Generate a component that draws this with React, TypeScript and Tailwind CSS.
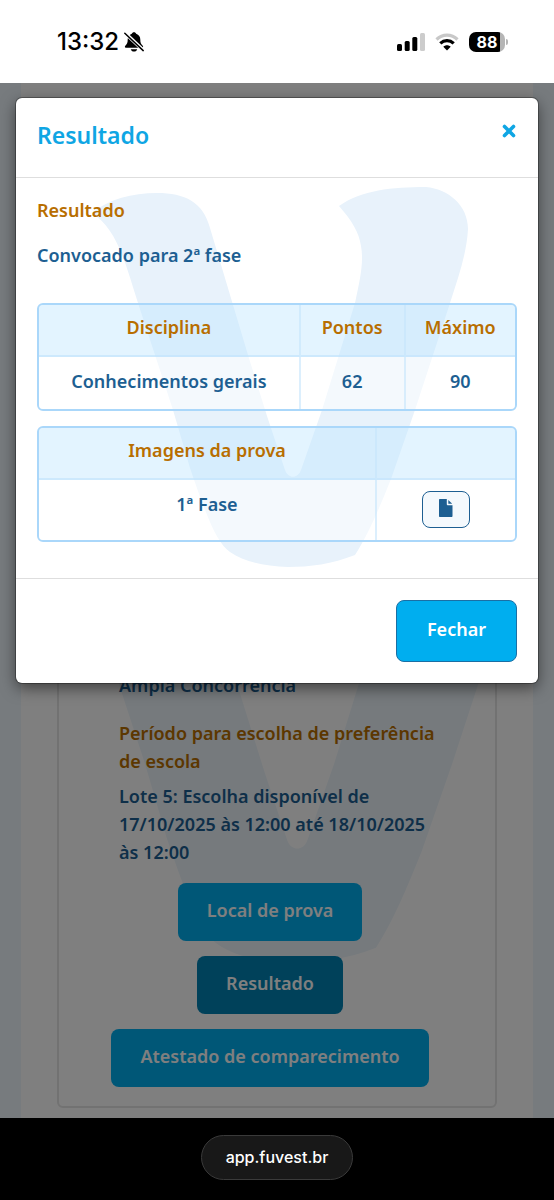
import React from "react";

const V_PATH =
  "M92 213 C109 199 132 193 157 193 C185 193 203 202 210 228 L248 355 L267 416 L285 470 C288 479 298 479 301 470 L322 410 L355 303 C360 280 364 262 361 246 C359 232 352 221 339 206 C362 190 392 187 426 187 C448 189 468 205 468 229 C467 246 463 262 458 278 L450 303 L415 410 L391 479 C379 509 368 535 355 555 C332 564 310 567 288 567 C264 566 244 562 230 552 C217 543 207 518 190 468 L173 410 L138 303 C125 262 117 229 92 213 Z";

function Watermark({ className }: { className: string }) {
  return (
    <svg viewBox="84 185 386 385" className={className} fill="currentColor" aria-hidden="true">
      <path d={V_PATH} />
    </svg>
  );
}

function StatusBar() {
  return (
    <header className="flex h-[83px] shrink-0 items-center justify-between bg-white pr-[46px] pl-[57px] font-['Inter',sans-serif] text-black">
      <div className="flex items-center gap-[5px]">
        <span className="text-[24px] leading-7 font-medium">13:32</span>
        <svg viewBox="0 0 20 20" className="size-5" aria-label="Silencioso">
          <path d="M10 .3c-1.100 0-1.900.7-2.200 1.500C5.200 2.700 3.700 4.900 3.700 7.500c0 3.500-.7 4.700-2.400 6.200-.6.600-.7 2.100.6 2.100h16.200c1.300 0 1.200-1.500.6-2.100-1.700-1.500-2.400-2.700-2.400-6.200 0-2.600-1.500-4.800-4.100-5.700C11.900 1 11.100.3 10 .3Z" />
          <path d="M6.800 17.200h6.400c-.4 1.500-1.600 2.300-3.200 2.300s-2.800-.8-3.200-2.300Z" />
          <path d="M.5 .5 19.500 18.500" stroke="#fff" strokeWidth="3.600" />
          <path d="M.8 1.200 19.200 18.600" stroke="#000" strokeWidth="1.500" strokeLinecap="round" />
        </svg>
      </div>
      <div className="flex items-center gap-[10px]">
        <svg viewBox="0 0 28 18" className="h-[18px] w-7" aria-label="Sinal">
          <rect x="0" y="11" width="5" height="7" rx="1.500" />
          <rect x="7.700" y="8" width="5" height="10" rx="1.500" />
          <rect x="15.300" y="4" width="5" height="14" rx="1.500" />
          <rect x="23" y="0" width="5" height="18" rx="1.500" fill="#ccc" />
        </svg>
        <svg viewBox="0 0 24 18" className="h-[18px] w-6" fill="none" aria-label="Wi-Fi">
          <path d="M1.500 6.500C7.500.7 16.500.7 22.500 6.500" stroke="#c8c8c8" strokeWidth="3.200" />
          <path d="M5.300 10.300c3.900-3.700 9.500-3.700 13.400 0" stroke="#000" strokeWidth="3.200" />
          <path d="M12 17.500 8.300 13.800c2.100-2 5.300-2 7.400 0Z" fill="#000" />
        </svg>
        <div className="flex items-center gap-px">
          <div className="flex h-5 w-9 items-center justify-center overflow-hidden rounded-[7px] bg-[linear-gradient(90deg,#000_86%,#b5b5b5_86%)] text-[16px] leading-5 font-bold text-white">
            88
          </div>
          <span className="h-[6px] w-[2px] rounded-r-full bg-[#b5b5b5]" />
        </div>
      </div>
    </header>
  );
}

const pageButton =
  "rounded-lg px-[29px] pt-[13px] pb-[17px] text-[18px] leading-7 font-semibold text-white";

function Page() {
  return (
    <div className="flex flex-1 flex-col bg-[#eef6fc] px-[21px]">
      <div className="flex flex-1 flex-col bg-white px-9 pt-10 pb-[10px]">
        <section className="relative flex flex-1 flex-col justify-end rounded-md border-2 border-[#e4e4e4] px-[60px] pb-[19px]">
          <Watermark className="absolute bottom-[139px] left-1/2 h-[489px] w-[490px] max-w-none -translate-x-1/2 text-[#edf5fb]" />
          <div className="relative -mr-2 text-[18px] leading-7 font-semibold text-[#1d5f92]">
            <p className="mb-5">Ampla Concorrência</p>
            <h3 className="mb-[7px] text-[#b86e00]">Período para escolha de preferência de escola</h3>
            <p>Lote 5: Escolha disponível de 17/10/2025 às 12:00 até 18/10/2025 às 12:00</p>
          </div>
          <div className="relative mt-[17px] -mr-2 -ml-[22px] flex flex-col items-center gap-[15px]">
            <button type="button" className={`${pageButton} bg-[#00aeef]`}>Local de prova</button>
            <button type="button" className={`${pageButton} bg-[#0082b4]`}>Resultado</button>
            <button type="button" className={`${pageButton} bg-[#00aeef]`}>Atestado de comparecimento</button>
          </div>
        </section>
      </div>
    </div>
  );
}

const tableBox =
  "w-full table-fixed border-separate border-spacing-0 overflow-hidden rounded-md border-2 border-[#aad7fa] text-center";
const headCell =
  "border-b-2 border-[#c4e4fc]/70 bg-[#c2e6ff]/45 pt-[8px] pb-[14px] font-semibold text-[#b86e00]";
const bodyCell = "bg-white/50 pt-[10px] pb-[14px] align-top";
const divider = "border-r-2 border-r-[#c4e4fc]/60";

function ResultModal() {
  return (
    <div className="absolute inset-0 bg-black/50 px-4 pt-[15px]">
      <div
        role="dialog"
        aria-modal="true"
        aria-labelledby="modal-title"
        className="rounded-md bg-white text-[18px] leading-7 font-semibold text-[#1d5f92] shadow-[0_5px_15px_rgba(0,0,0,0.5),0_0_0_1px_rgba(0,0,0,0.3)]"
      >
        <div className="flex items-start justify-between border-b border-[#dedede] px-[21px] pt-[21px] pb-[26px]">
          <h1 id="modal-title" className="text-[23px] leading-8 text-[#0fa6e4]">Resultado</h1>
          <button type="button" aria-label="Fechar janela" className="mt-1 p-px">
            <svg viewBox="0 0 14 14" className="size-[14px]" aria-hidden="true">
              <path d="M2.500 2.500 11.500 11.500M11.500 2.500 2.500 11.500" stroke="#0fa6e4" strokeWidth="3.600" strokeLinecap="round" />
            </svg>
          </button>
        </div>
        <div className="relative px-[21px] pt-[18px] pb-9">
          <Watermark className="absolute bottom-2 left-1/2 h-[385px] w-[386px] max-w-none -translate-x-1/2 text-[#e8f2fb]" />
          <div className="relative">
            <h2 className="mb-[17px] text-[#b86e00]">Resultado</h2>
            <p className="mb-[34px]">Convocado para 2ª fase</p>
            <table className={`${tableBox} mb-[15px]`}>
              <thead>
                <tr>
                  <th className={`${headCell} ${divider} w-[55%]`}>Disciplina</th>
                  <th className={`${headCell} ${divider}`}>Pontos</th>
                  <th className={`${headCell} w-[23%]`}>Máximo</th>
                </tr>
              </thead>
              <tbody>
                <tr>
                  <td className={`${bodyCell} ${divider}`}>Conhecimentos gerais</td>
                  <td className={`${bodyCell} ${divider}`}>62</td>
                  <td className={bodyCell}>90</td>
                </tr>
              </tbody>
            </table>
            <table className={tableBox}>
              <thead>
                <tr>
                  <th className={`${headCell} ${divider} w-[71%]`}>Imagens da prova</th>
                  <th className={headCell} aria-label="Arquivo" />
                </tr>
              </thead>
              <tbody>
                <tr>
                  <td className={`${bodyCell} ${divider}`}>1ª Fase</td>
                  <td className="bg-white/50 pt-[11px] pb-3">
                    <button
                      type="button"
                      aria-label="Abrir prova da 1ª fase"
                      className="mx-auto flex h-[37px] w-12 items-center justify-center rounded-lg border border-[#1d5f92] bg-[#f4f9fd] pb-1"
                    >
                      <svg viewBox="0 0 14 18" className="h-[18px] w-[14px]" fill="#1d5f92" aria-hidden="true">
                        <path d="M1 0h6.800v5.200c0 .7.400 1.100 1.100 1.100H13.500V17c0 .6-.4 1-1 1H1c-.6 0-1-.4-1-1V1c0-.6.400-1 1-1Z" />
                        <path d="M9.300 1v3.800h3.900Z" />
                      </svg>
                    </button>
                  </td>
                </tr>
              </tbody>
            </table>
          </div>
        </div>
        <div className="flex justify-end border-t border-[#dedede] px-[21px] pt-[21px] pb-[21px]">
          <button
            type="button"
            className="rounded-lg border border-[#1a6fa5] bg-[#00aeef] px-[30px] pt-[14px] pb-[18px] leading-7 text-white"
          >
            Fechar
          </button>
        </div>
      </div>
    </div>
  );
}

export default function App() {
  return (
    <div className="flex min-h-screen flex-col font-['Noto_Sans',sans-serif]">
      <StatusBar />
      <main className="relative flex flex-1 flex-col overflow-hidden">
        <Page />
        <ResultModal />
      </main>
      <footer className="flex h-[82px] shrink-0 items-start justify-center bg-black pt-[17px]">
        <a
          href="#"
          className="rounded-full border border-[#3a3a3a] bg-[#181818] px-6 py-2 font-['Inter',sans-serif] text-[16px] leading-[27px] font-medium text-white"
        >
          app.fuvest.br
        </a>
      </footer>
    </div>
  );
}
